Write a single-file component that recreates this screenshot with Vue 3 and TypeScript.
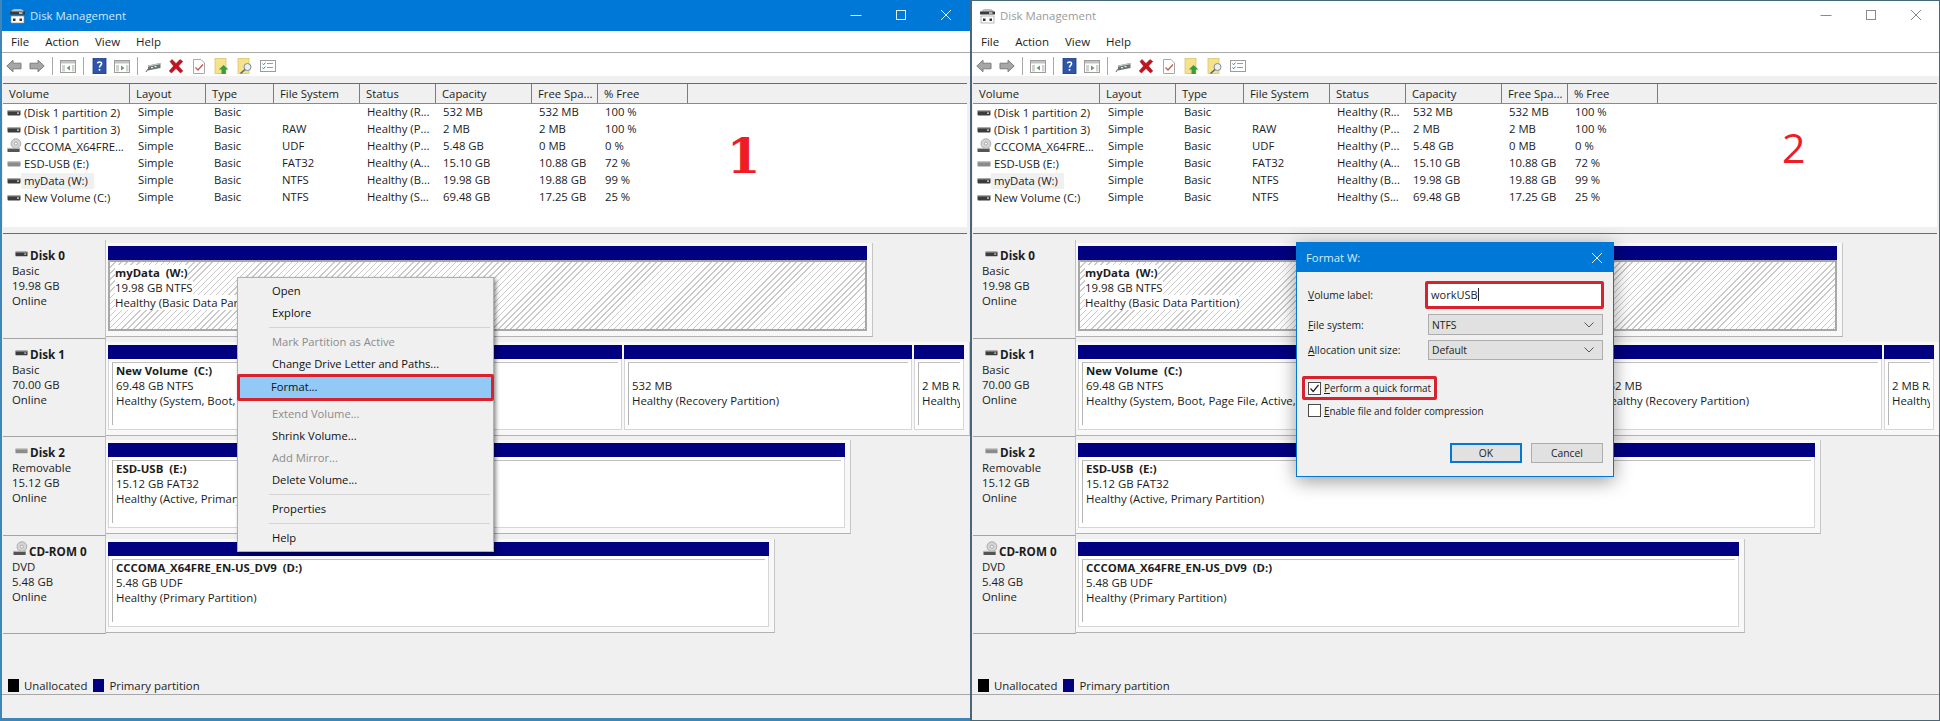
<template>
  <div class="screen">
    <!-- shared icons -->
    <svg class="defs" width="0" height="0">
      <symbol id="drive" viewBox="0 0 14 8">
        <rect x="0.5" y="1.5" width="13" height="5" rx="1" fill="#3c3c3c" />
        <rect x="0.5" y="1" width="13" height="1.4" fill="#a9a9a9" />
        <rect x="10" y="3.5" width="2" height="1.2" fill="#e8e8e8" />
      </symbol>
      <symbol id="usb" viewBox="0 0 14 8">
        <rect x="0.5" y="1.5" width="13" height="5" rx="1" fill="#8b8b8b" />
        <rect x="0.5" y="1" width="13" height="1.4" fill="#c4c4c4" />
      </symbol>
      <symbol id="cd" viewBox="0 0 16 16">
        <circle cx="9.5" cy="6" r="5.2" fill="#d4d4d4" stroke="#9a9a9a" stroke-width="0.8" />
        <circle cx="9.5" cy="6" r="1.6" fill="#fff" stroke="#8a8a8a" stroke-width="0.7" />
        <rect x="0.5" y="11" width="13" height="4" rx="0.7" fill="#555" />
        <rect x="0.5" y="10.5" width="13" height="1.2" fill="#b5b5b5" />
      </symbol>
      <symbol id="tb-back" viewBox="0 0 16 16">
        <path d="M0.8 8 7 2.2V5.2H15V10.8H7V13.8Z" fill="#a6a6a6" stroke="#7d7d7d" />
      </symbol>
      <symbol id="tb-fwd" viewBox="0 0 16 16">
        <path d="M15.2 8 9 2.2V5.2H1V10.8H9V13.8Z" fill="#a6a6a6" stroke="#7d7d7d" />
      </symbol>
      <symbol id="tb-tree" viewBox="0 0 16 16">
        <rect x="0.5" y="2.5" width="15" height="12" fill="#fff" stroke="#9c9c9c" />
        <rect x="1" y="3" width="14" height="2.5" fill="#c2c2c2" />
        <rect x="2" y="7" width="3" height="6.5" fill="#d2d2d2" />
        <rect x="12" y="7" width="2.5" height="6.5" fill="#d2d2d2" />
        <path d="M6.5 10 10 7.5V12.5Z" fill="#5f9f6a" />
      </symbol>
      <symbol id="tb-panel" viewBox="0 0 16 16">
        <rect x="0.5" y="2.5" width="15" height="12" fill="#fff" stroke="#9c9c9c" />
        <rect x="1" y="3" width="14" height="2.5" fill="#c2c2c2" />
        <rect x="2" y="7" width="3" height="6.5" fill="#d2d2d2" />
        <rect x="12" y="7" width="2.5" height="6.5" fill="#d2d2d2" />
        <path d="M10.5 10 7 7.5V12.5Z" fill="#5f9f6a" />
      </symbol>
      <symbol id="tb-help" viewBox="0 0 16 16">
        <rect x="2" y="0.5" width="13" height="15.5" fill="#2f55a8" stroke="#1d3c85" stroke-width="0.8" />
        <path d="M6.4 5.4C6.6 3.6 10.6 3.4 10.6 5.6 10.6 7.4 8.5 7.4 8.5 9.6" fill="none" stroke="#fff" stroke-width="1.5" />
        <rect x="7.7" y="11" width="1.6" height="1.7" fill="#fff" />
      </symbol>
      <symbol id="tb-disk" viewBox="0 0 16 16">
        <path d="M1 14 3 11" stroke="#777" stroke-width="1.2" />
        <path d="M3 7.5 15.5 5V10L3 12.5Z" fill="#68756e" />
        <path d="M3 7.5 15.5 5V6.2L3 8.7Z" fill="#c8c8c8" />
        <rect x="6" y="9" width="2" height="1.2" fill="#dff0e4" />
        <rect x="9.5" y="8" width="2" height="1.2" fill="#dff0e4" />
      </symbol>
      <symbol id="tb-del" viewBox="0 0 16 16">
        <path d="M2 3.5 4 1.5 8 5.5 12 1.5 14.8 3.5 10.5 8 14.8 13 12.5 15 8 10.5 3.5 15 1.2 13 5.5 8Z" fill="#c4121f" stroke="#8f0f18" stroke-width="0.5" />
      </symbol>
      <symbol id="tb-check" viewBox="0 0 16 16">
        <path d="M2.5 1.5H10L13.5 5V15.5H2.5Z" fill="#fff" stroke="#a8a8a8" />
        <path d="M4.5 9.5 7 12 12 6.5" fill="none" stroke="#c45a4a" stroke-width="1.3" />
      </symbol>
      <symbol id="tb-up" viewBox="0 0 16 16">
        <rect x="1" y="0.5" width="11" height="15" fill="#f7e28c" stroke="#d8bd63" stroke-width="0.7" />
        <path d="M9.5 7 14.5 11.5H11.8V16H7.5V11.5H4.8Z" fill="#3e9a3e" />
      </symbol>
      <symbol id="tb-find" viewBox="0 0 16 16">
        <rect x="1" y="0.5" width="11" height="15" fill="#f7e28c" stroke="#d8bd63" stroke-width="0.7" />
        <circle cx="10.5" cy="9" r="3.5" fill="#e6f0f5" stroke="#7d8c96" />
        <path d="M8 11.5 3.5 15.5" stroke="#5a6872" stroke-width="1.6" />
      </symbol>
      <symbol id="tb-list" viewBox="0 0 16 16">
        <rect x="0.5" y="2.5" width="15" height="11" fill="#fff" stroke="#9c9c9c" />
        <path d="M2.5 5.5 3.6 6.8 5.4 4.6M2.5 9.5 3.6 10.8 5.4 8.6" fill="none" stroke="#3f7fb0" />
        <path d="M7 5.5H13M7 9.5H13" stroke="#9c9c9c" />
      </symbol>
    </svg>

    <div v-for="win in windows" :key="win.mark" class="win" :class="win.active ? 'active' : 'inactive'">
      <header class="titlebar">
        <svg class="app-icon" width="17" height="16" viewBox="0 0 17 16">
          <path d="M2 5C2 2 4 1 6 1H11C13 1 15 2 15 5Z" fill="#bdbdbd" />
          <rect x="1" y="3.5" width="15" height="3" fill="#3a3a3a" />
          <rect x="10" y="4.4" width="3.5" height="1.2" fill="#fff" />
          <rect x="2" y="8" width="13" height="7" fill="#fff" stroke="#8a8a8a" stroke-width="0.6" />
          <rect x="4" y="10.5" width="2.5" height="2.5" fill="#333" />
          <rect x="10.5" y="10.5" width="2.5" height="2.5" fill="#333" />
        </svg>
        <span class="title-text">Disk Management</span>
        <div class="controls">
          <svg width="12" height="12" viewBox="0 0 12 12"><path d="M0.5 6.5H11.5" /></svg>
          <svg width="12" height="12" viewBox="0 0 12 12"><rect x="1.5" y="1.5" width="9" height="9" /></svg>
          <svg width="12" height="12" viewBox="0 0 12 12"><path d="M1 1 11 11M11 1 1 11" /></svg>
        </div>
      </header>

      <nav class="menubar">
        <span v-for="m in menus" :key="m">{{ m }}</span>
      </nav>

      <div class="toolbar">
        <template v-for="(t, i) in toolbar" :key="i">
          <i v-if="t === 'sep'" class="tool-sep"></i>
          <svg v-else class="tool" width="16" height="16"><use :href="'#' + t" /></svg>
        </template>
      </div>

      <section class="list">
        <div class="row list-head">
          <div v-for="c in columns" :key="c" class="cell">{{ c }}</div>
          <div class="cell"></div>
        </div>
        <div v-for="v in volumes" :key="v.name" class="row">
          <div class="cell vol">
            <svg v-if="v.icon === 'cd'" class="vol-icon cd" width="15" height="15"><use href="#cd" /></svg>
            <svg v-else class="vol-icon" width="14" height="8"><use :href="'#' + v.icon" /></svg>
            <span :class="{ focus: v.focus }">{{ v.name }}</span>
          </div>
          <div class="cell">Simple</div>
          <div class="cell">Basic</div>
          <div class="cell">{{ v.fs }}</div>
          <div class="cell">{{ v.status }}</div>
          <div class="cell">{{ v.capacity }}</div>
          <div class="cell">{{ v.free }}</div>
          <div class="cell">{{ v.pct }}</div>
        </div>
      </section>

      <section class="disks">
        <div v-for="d in disks" :key="d.name" class="disk">
          <div class="disk-label">
            <div class="disk-name">
              <svg v-if="d.icon === 'cd'" class="label-cd" width="15" height="15"><use href="#cd" /></svg>
              <svg v-else class="label-icon" width="13" height="8"><use :href="'#' + d.icon" /></svg>
              {{ d.name }}
            </div>
            <div v-for="line in d.info" :key="line">{{ line }}</div>
          </div>
          <div class="parts">
            <div
              v-for="p in d.parts"
              :key="p.width"
              class="part"
              :class="{ hatched: p.hatched }"
              :style="{ width: p.width + 'px' }"
            >
              <div class="part-bar"></div>
              <div class="part-box">
                <div class="part-text">
                  <div class="part-name">{{ p.name }}</div>
                  <div>{{ p.size }}</div>
                  <div>{{ p.status }}</div>
                </div>
              </div>
            </div>
          </div>
        </div>
        <div class="legend">
          <i class="swatch black"></i><span>Unallocated</span>
          <i class="swatch navy"></i><span>Primary partition</span>
        </div>
      </section>

      <footer class="statusbar"></footer>

      <div class="mark" :class="win.active ? 'mark-one' : 'mark-two'">{{ win.mark }}</div>

      <!-- context menu, step 1 -->
      <ul v-if="win.active" class="ctx">
        <template v-for="(item, i) in contextMenu" :key="i">
          <li v-if="item.sep" class="ctx-sep"></li>
          <li v-else class="ctx-item" :class="{ off: item.off, picked: item.picked }">{{ item.label }}</li>
        </template>
      </ul>

      <!-- format dialog, step 2 -->
      <div v-else class="dialog">
        <div class="dlg-title">
          <span>Format W:</span>
          <svg width="12" height="12" viewBox="0 0 12 12"><path d="M1 1 11 11M11 1 1 11" /></svg>
        </div>
        <div class="dlg-body">
          <div class="dlg-grid">
            <label><u>V</u>olume label:</label>
            <div class="dlg-input">workUSB<i class="caret"></i></div>
            <label><u>F</u>ile system:</label>
            <div class="dlg-select">NTFS<svg width="10" height="6" viewBox="0 0 10 6"><path d="M0.5 0.5 5 5 9.5 0.5" /></svg></div>
            <label><u>A</u>llocation unit size:</label>
            <div class="dlg-select">Default<svg width="10" height="6" viewBox="0 0 10 6"><path d="M0.5 0.5 5 5 9.5 0.5" /></svg></div>
          </div>
          <div class="dlg-check picked-check">
            <svg class="box" width="13" height="13" viewBox="0 0 13 13"><rect x="0.5" y="0.5" width="12" height="12" /><path class="tick" d="M2.5 6.5 5.2 9.5 10.5 3" /></svg>
            <span><u>P</u>erform a quick format</span>
          </div>
          <div class="dlg-check">
            <svg class="box" width="13" height="13" viewBox="0 0 13 13"><rect x="0.5" y="0.5" width="12" height="12" /></svg>
            <span><u>E</u>nable file and folder compression</span>
          </div>
          <div class="dlg-actions">
            <button class="btn default">OK</button>
            <button class="btn">Cancel</button>
          </div>
        </div>
      </div>
    </div>
  </div>
</template>

<script setup lang="ts">
interface Volume {
  icon: string;
  name: string;
  fs: string;
  status: string;
  capacity: string;
  free: string;
  pct: string;
  focus?: boolean;
}

interface Part {
  width: number;
  name: string;
  size: string;
  status: string;
  hatched?: boolean;
}

interface Disk {
  name: string;
  icon: string;
  info: string[];
  parts: Part[];
}

interface MenuEntry {
  label?: string;
  sep?: boolean;
  off?: boolean;
  picked?: boolean;
}

const windows = [
  { mark: '1', active: true },
  { mark: '2', active: false },
];

const menus = ['File', 'Action', 'View', 'Help'];

const toolbar = [
  'tb-back', 'tb-fwd', 'sep', 'tb-tree', 'sep', 'tb-help', 'tb-panel', 'sep',
  'tb-disk', 'tb-del', 'tb-check', 'tb-up', 'tb-find', 'tb-list',
];

const columns = ['Volume', 'Layout', 'Type', 'File System', 'Status', 'Capacity', 'Free Spa...', '% Free'];

const volumes: Volume[] = [
  { icon: 'drive', name: '(Disk 1 partition 2)', fs: '', status: 'Healthy (R...', capacity: '532 MB', free: '532 MB', pct: '100 %' },
  { icon: 'drive', name: '(Disk 1 partition 3)', fs: 'RAW', status: 'Healthy (P...', capacity: '2 MB', free: '2 MB', pct: '100 %' },
  { icon: 'cd', name: 'CCCOMA_X64FRE...', fs: 'UDF', status: 'Healthy (P...', capacity: '5.48 GB', free: '0 MB', pct: '0 %' },
  { icon: 'usb', name: 'ESD-USB (E:)', fs: 'FAT32', status: 'Healthy (A...', capacity: '15.10 GB', free: '10.88 GB', pct: '72 %' },
  { icon: 'drive', name: 'myData (W:)', fs: 'NTFS', status: 'Healthy (B...', capacity: '19.98 GB', free: '19.88 GB', pct: '99 %', focus: true },
  { icon: 'drive', name: 'New Volume (C:)', fs: 'NTFS', status: 'Healthy (S...', capacity: '69.48 GB', free: '17.25 GB', pct: '25 %' },
];

const disks: Disk[] = [
  {
    name: 'Disk 0',
    icon: 'drive',
    info: ['Basic', '19.98 GB', 'Online'],
    parts: [{ width: 759, name: 'myData  (W:)', size: '19.98 GB NTFS', status: 'Healthy (Basic Data Partition)', hatched: true }],
  },
  {
    name: 'Disk 1',
    icon: 'drive',
    info: ['Basic', '70.00 GB', 'Online'],
    parts: [
      { width: 514, name: 'New Volume  (C:)', size: '69.48 GB NTFS', status: 'Healthy (System, Boot, Page File, Active, Crash Dump, Primary Partition)' },
      { width: 288, name: '', size: '532 MB', status: 'Healthy (Recovery Partition)' },
      { width: 50, name: '', size: '2 MB RAW', status: 'Healthy (Primary Partition)' },
    ],
  },
  {
    name: 'Disk 2',
    icon: 'usb',
    info: ['Removable', '15.12 GB', 'Online'],
    parts: [{ width: 737, name: 'ESD-USB  (E:)', size: '15.12 GB FAT32', status: 'Healthy (Active, Primary Partition)' }],
  },
  {
    name: 'CD-ROM 0',
    icon: 'cd',
    info: ['DVD', '5.48 GB', 'Online'],
    parts: [{ width: 661, name: 'CCCOMA_X64FRE_EN-US_DV9  (D:)', size: '5.48 GB UDF', status: 'Healthy (Primary Partition)' }],
  },
];

const contextMenu: MenuEntry[] = [
  { label: 'Open' },
  { label: 'Explore' },
  { sep: true },
  { label: 'Mark Partition as Active', off: true },
  { label: 'Change Drive Letter and Paths...' },
  { label: 'Format...', picked: true },
  { label: 'Extend Volume...', off: true },
  { label: 'Shrink Volume...' },
  { label: 'Add Mirror...', off: true },
  { label: 'Delete Volume...' },
  { sep: true },
  { label: 'Properties' },
  { sep: true },
  { label: 'Help' },
];
</script>

<style>
html,
body {
  margin: 0;
  background: #f0f0f0;
}
</style>

<style scoped>
.screen {
  display: flex;
  width: 1940px;
  height: 721px;
  overflow: hidden;
  font-family: 'Open Sans', 'Noto Sans', sans-serif;
  font-size: 11.3px;
  color: #1c1c1c;
}

.defs {
  position: absolute;
}

.win {
  position: relative;
  display: flex;
  flex-direction: column;
  width: 970px;
  height: 721px;
  background: #f0f0f0;
  flex: none;
}

.win::after {
  content: '';
  position: absolute;
  inset: 0;
  pointer-events: none;
}

.win.active::after {
  border-left: 2px solid #3f85b8;
  border-bottom: 3px solid #3f85b8;
}

.win.inactive::after {
  border: 1px solid #47687a;
  border-left-width: 2px;
}

.titlebar {
  display: flex;
  align-items: center;
  height: 31px;
  padding-left: 9px;
  flex: none;
}

.active .titlebar {
  background: #0078d7;
  color: #cfe9fb;
}

.inactive .titlebar {
  background: #fff;
  color: #9a9a9a;
}

.app-icon {
  margin-right: 4px;
}

.title-text {
  font-size: 11.4px;
}

.controls {
  display: flex;
  gap: 33px;
  margin-left: auto;
  margin-right: 18px;
  margin-top: -2px;
}

.controls svg {
  fill: none;
  stroke-width: 1;
}

.active .controls svg {
  stroke: #dff0fb;
}

.inactive .controls svg {
  stroke: #8a8a8a;
}

.menubar {
  display: flex;
  gap: 16px;
  height: 22px;
  align-items: center;
  padding-left: 11px;
  background: #fff;
  border-bottom: 1px solid #a9a9a9;
  box-sizing: border-box;
  font-size: 11.5px;
  flex: none;
}

.toolbar {
  display: flex;
  align-items: center;
  gap: 7px;
  height: 23px;
  padding: 3px 0 0 6px;
  box-sizing: border-box;
  background: #fff;
  flex: none;
}

.tool-sep {
  width: 1px;
  height: 18px;
  background: #a8a8a8;
}

.list {
  margin: 7px 3px 0;
  height: 149px;
  background: #fff;
  border-top: 1px solid #6c6c6c;
  border-bottom: 1px solid #6c6c6c;
  box-shadow: inset 0 -6px 0 #f0f0f0;
  flex: none;
}

.row {
  display: grid;
  grid-template-columns: 127px 76px 68px 86px 76px 96px 66px 90px 1fr;
  height: 17px;
  line-height: 16px;
  white-space: nowrap;
}

.list-head {
  height: 19px;
  line-height: 19px;
  background: #f0f0f0;
  border-bottom: 1px solid #8a8a8a;
}

.list-head .cell {
  border-right: 1px solid #7c7c7c;
  padding-left: 6px;
}

.cell {
  padding-left: 8px;
  overflow: hidden;
}

.row .cell:first-child {
  padding-left: 6px;
}

.row:not(.list-head) .cell:nth-child(5),
.row:not(.list-head) .cell:nth-child(6),
.row:not(.list-head) .cell:nth-child(7),
.row:not(.list-head) .cell:nth-child(8) {
  padding-left: 7px;
}

.list-head .cell:last-child {
  border-right: none;
}

.vol {
  display: flex;
  align-items: center;
  padding-left: 4px !important;
}

.vol-icon {
  margin-right: 3px;
  flex: none;
}

.vol-icon.cd {
  margin-right: 2px;
  margin-top: -2px;
}

.focus {
  background: #f0f0f0;
  padding: 0 6px 0 3px;
  margin-left: -3px;
}

.disks {
  flex: 1;
  padding: 6px 0 0 3px;
  display: flex;
  flex-direction: column;
  min-height: 0;
  font-size: 11.4px;
}

.disk {
  display: flex;
  height: 98.6px;
  flex: none;
}

.disk-label {
  width: 103px;
  flex: none;
  box-sizing: border-box;
  padding: 8px 0 0 9px;
  line-height: 15px;
  border-bottom: 1px solid #a3a3a3;
  border-right: 1px solid #c2c2c2;
}

.disk-name {
  font-weight: 700;
  font-size: 11.7px;
  display: flex;
  align-items: center;
  gap: 2px;
}

.label-icon {
  margin-left: 3px;
  margin-top: -3px;
}

.label-cd {
  margin-left: 1px;
  margin-right: -1px;
  margin-top: -5px;
}

.parts {
  display: flex;
  gap: 2px;
  align-self: flex-start;
  margin: 3px 0 0 0;
  padding: 3px 5px 5px 2px;
  background: #f8f8f8;
  border-right: 1px solid #c6c6c6;
  border-bottom: 1px solid #b2b2b2;
}

.part {
  display: flex;
  flex-direction: column;
  height: 85px;
  flex: none;
  min-width: 0;
}

.part-bar {
  height: 14px;
  background: #000080;
  flex: none;
}

.part-box {
  flex: 1;
  min-height: 0;
  background: #fff;
  padding: 3px 3px 4px;
  border: 1px solid #d6d6d6;
  border-top: none;
  box-sizing: border-box;
}

.part-text {
  height: 100%;
  box-sizing: border-box;
  padding: 0 3px 0 3px;
  line-height: 15px;
  border-top: 1px solid #c0c0c0;
  border-left: 1px solid #b5b5b5;
  white-space: pre;
  overflow: hidden;
}

.part-name {
  font-weight: 700;
  height: 15px;
}

.part.hatched .part-box {
  padding: 0;
  border: 2px solid #a8a8a8;
  background: repeating-linear-gradient(135deg, #fff 0 3.3px, #cacaca 3.3px 4.3px);
}

.part.hatched .part-text {
  border: none;
  padding: 3px 0 0 5px;
}

.part.hatched .part-text div {
  width: fit-content;
  background: #fff;
}

.legend {
  margin-top: 43px;
  display: flex;
  align-items: center;
  height: 20px;
  padding-left: 5px;
}

.swatch {
  width: 11px;
  height: 13px;
  margin-right: 5px;
}

.legend span {
  margin-right: 6px;
}

.black {
  background: #000;
}

.navy {
  background: #000080;
}

.statusbar {
  height: 26px;
  border-top: 1px solid #a8a8a8;
  background: #f0f0f0;
  flex: none;
}

.mark {
  position: absolute;
  color: #ee1c25;
  line-height: 1;
}

.mark-one {
  left: 727px;
  top: 132px;
  font-family: 'DejaVu Serif', serif;
  font-weight: 700;
  font-size: 48px;
}

.mark-two {
  left: 812px;
  top: 127px;
  font-family: 'Open Sans', sans-serif;
  font-size: 41px;
}

.ctx {
  position: absolute;
  left: 237px;
  top: 277px;
  width: 257px;
  height: 275px;
  margin: 0;
  padding: 2px 1px 4px;
  box-sizing: border-box;
  list-style: none;
  background: #f0f0f0;
  border: 1px solid #b0b0b0;
  box-shadow: 2px 2px 4px rgba(0, 0, 0, 0.45);
  font-size: 11.2px;
  color: #111;
}

.ctx-item {
  height: 22px;
  line-height: 22px;
  padding-left: 33px;
}

.ctx-item.off {
  color: #8b8b8b;
}

.ctx-item.picked {
  height: 27px;
  line-height: 19px;
  margin: -1px -2px 2px;
  padding-left: 31px;
  background: #91c9f7;
  border: 3px solid #d9222e;
  border-radius: 2px;
  box-sizing: border-box;
}

.ctx-sep {
  height: 1px;
  margin: 3px 2px 3px 30px;
  background: #d4d4d4;
}

.dialog {
  position: absolute;
  left: 326px;
  top: 242px;
  width: 318px;
  height: 235px;
  box-sizing: border-box;
  display: flex;
  flex-direction: column;
  background: #f0f0f0;
  border: 1px solid #0078d7;
  box-shadow: 0 4px 18px rgba(0, 0, 0, 0.4);
  font-size: 10.3px;
}

.dlg-title {
  display: flex;
  align-items: center;
  justify-content: space-between;
  height: 29px;
  padding: 0 10px 0 9px;
  background: #0078d7;
  color: #d5ecfb;
  font-size: 11.3px;
  flex: none;
}

.dlg-title svg {
  fill: none;
  stroke: #e6f4fd;
}

.dlg-body {
  display: flex;
  flex-direction: column;
  padding: 9px 9px 0 5px;
  flex: 1;
}

.dlg-grid {
  display: grid;
  grid-template-columns: 117px 179px;
  grid-template-rows: 28px 21px 20px;
  row-gap: 5px;
  align-items: center;
  padding-left: 6px;
  margin-bottom: 16px;
}

.dlg-input {
  position: relative;
  height: 28px;
  line-height: 21px;
  padding-left: 3px;
  background: #fff;
  border: 3px solid #d9222e;
  border-radius: 2px;
  box-sizing: border-box;
  font-size: 11px;
}

.caret {
  display: inline-block;
  width: 1px;
  height: 13px;
  background: #222;
  vertical-align: -2px;
}

.dlg-select {
  display: flex;
  align-items: center;
  justify-content: space-between;
  height: 100%;
  margin: 0 1px 0 3px;
  padding: 0 8px 0 3px;
  background: #e1e1e1;
  border: 1px solid #adadad;
  box-sizing: border-box;
}

.dlg-select svg {
  fill: none;
  stroke: #555;
}

.dlg-check {
  display: flex;
  align-items: center;
  gap: 3px;
  height: 21px;
  padding-left: 6px;
  white-space: nowrap;
  font-size: 9.9px;
}

.picked-check {
  width: 135px;
  height: 24px;
  box-sizing: border-box;
  padding-left: 3px;
  border: 3px solid #d9222e;
  border-radius: 2px;
}

.box {
  flex: none;
}

.box rect {
  fill: #fff;
  stroke: #4a4a4a;
}

.box .tick {
  fill: none;
  stroke: #222;
  stroke-width: 1.2;
}

.dlg-actions {
  display: flex;
  justify-content: flex-end;
  gap: 9px;
  margin-top: auto;
  margin-bottom: 13px;
  margin-right: 1px;
}

.btn {
  width: 72px;
  height: 20px;
  padding: 0;
  font: inherit;
  color: #1c1c1c;
  background: #e1e1e1;
  border: 1px solid #adadad;
  box-sizing: border-box;
}

.btn.default {
  border: 2px solid #0078d7;
}

u {
  text-underline-offset: 1px;
}
</style>
